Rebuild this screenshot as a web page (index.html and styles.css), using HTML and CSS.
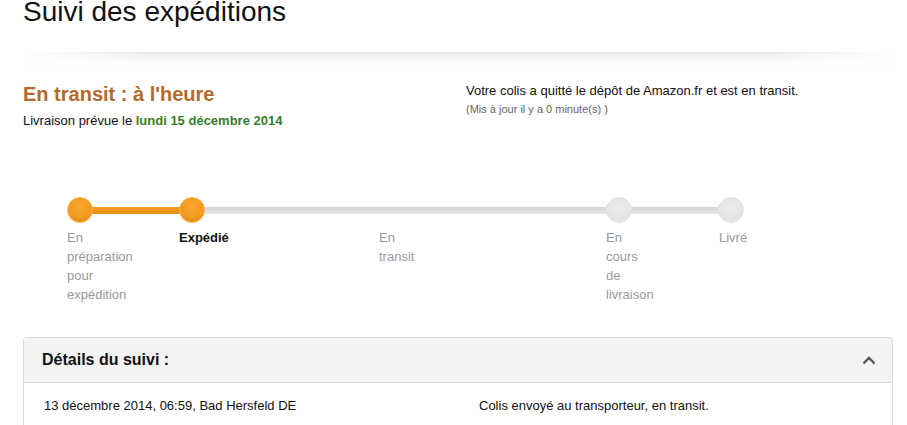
FILE: index.html
```html
<!DOCTYPE html>
<html lang="fr">
<head>
  <meta charset="UTF-8">
  <title>Suivi des expéditions</title>
  <link rel="stylesheet" href="styles.css">
</head>
<body>
  <div class="page">
    <!-- Title -->
    <h1 class="page-title">Suivi des expéditions</h1>
    <div class="divider"></div>

    <!-- Status summary -->
    <div class="status">
      <div class="status-left">
        <h2 class="status-title">En transit : à l'heure</h2>
        <p class="status-eta">Livraison prévue le <strong>lundi 15 décembre 2014</strong></p>
      </div>
      <div class="status-right">
        <p class="status-msg">Votre colis a quitté le dépôt de Amazon.fr et est en transit.</p>
        <p class="status-updated">(Mis à jour il y a 0 minute(s) )</p>
      </div>
    </div>

    <!-- Progress tracker -->
    <div class="progress">
      <div class="track">
        <span class="dot done"></span>
        <span class="seg done seg-short"></span>
        <span class="dot done"></span>
        <span class="seg seg-long"></span>
        <span class="dot"></span>
        <span class="seg seg-short"></span>
        <span class="dot"></span>
      </div>
      <div class="labels">
        <span class="label">En préparation pour expédition</span>
        <span class="label current">Expédié</span>
        <span class="label">En transit</span>
        <span class="label">En cours de livraison</span>
        <span class="label">Livré</span>
      </div>
    </div>

    <!-- Tracking details -->
    <div class="details">
      <div class="details-head">
        <span>Détails du suivi :</span>
        <svg class="chevron" width="14" height="9" viewBox="0 0 14 9">
          <path d="M1.5 7.5 L7 2 L12.5 7.5" fill="none" stroke="#555" stroke-width="2.4"/>
        </svg>
      </div>
      <div class="details-row">
        <span class="col-when">13 décembre 2014, 06:59, Bad Hersfeld DE</span>
        <span class="col-what">Colis envoyé au transporteur, en transit.</span>
      </div>
    </div>
  </div>
</body>
</html>
```

FILE: styles.css
```css
/* Basic styling */
body {
  margin: 0;
  font-family: "Liberation Sans", Arial, sans-serif;
  color: #111;
  background: #fff;
}

.page {
  padding: 0 14px 0 23px;
}

/* Title */
.page-title {
  font-size: 28px;
  font-weight: normal;
  line-height: 28px;
  margin: -2px 0 0;
}

/* Shadowed divider under the title */
.divider {
  height: 14px;
  margin: 26px 0 16px;
  background:
    linear-gradient(to right, rgba(255,255,255,1), rgba(255,255,255,0) 15%, rgba(255,255,255,0) 85%, rgba(255,255,255,1)),
    linear-gradient(to bottom, #e2e2e2 0, #efefef 2px, #f8f8f8 8px, #fff 14px);
}

/* Status block */
.status {
  display: flex;
}

.status-left {
  width: 443px;
}

.status-title {
  margin: 0 0 5px;
  font-size: 20px;
  line-height: 24px;
  font-weight: bold;
  color: #b4692d;
}

.status-eta {
  margin: 0;
  font-size: 13px;
  line-height: 19px;
}

.status-eta strong {
  color: #3a7d2b;
}

.status-right {
  margin-top: -1px;
}

.status-msg {
  margin: 0;
  font-size: 13px;
  line-height: 19px;
}

.status-updated {
  margin: 0;
  font-size: 11px;
  line-height: 19px;
  color: #666;
}

/* Progress tracker */
.progress {
  margin-top: 67px;
  padding-left: 44px;
}

.track {
  display: flex;
  align-items: center;
  height: 26px;
}

.dot {
  width: 26px;
  height: 26px;
  border-radius: 50%;
  flex: none;
  box-sizing: border-box;
  background: radial-gradient(circle at 50% 35%, #ececec, #dedede);
  border: 1px solid #e2e2e2;
  position: relative;
  z-index: 1;
}

.dot.done {
  background: radial-gradient(circle at 50% 35%, #f7a52e, #ee8f12);
  border-color: #f5b650;
}

.seg {
  height: 7px;
  flex: none;
  background: linear-gradient(to bottom, #d4d4d4, #e4e4e4);
  margin: 0 -2px;
}

.seg.done {
  background: linear-gradient(to bottom, #f09a1e, #ec9214);
}

.seg-short {
  width: 90px;
}

.seg-long {
  width: 405px;
}

.labels {
  display: grid;
  grid-template-columns: 112px 200px 227px 113px auto;
  margin-top: 5px;
}

.label {
  width: min-content;
  font-size: 13px;
  line-height: 19px;
  color: #9a9a9a;
}

.label.current {
  color: #111;
  font-weight: bold;
}

/* Tracking details box */
.details {
  margin-top: 33px;
  border: 1px solid #dcdcdc;
  border-radius: 4px 4px 0 0;
  border-bottom: none;
}

.details-head {
  display: flex;
  justify-content: space-between;
  align-items: center;
  height: 44px;
  padding: 0 16px 0 18px;
  background: #f3f3f3;
  border-bottom: 1px solid #dcdcdc;
  font-size: 16px;
  font-weight: bold;
}

.details-row {
  display: flex;
  padding: 13px 20px 14px;
  font-size: 13px;
  line-height: 19px;
}

.col-when {
  width: 435px;
}
```
